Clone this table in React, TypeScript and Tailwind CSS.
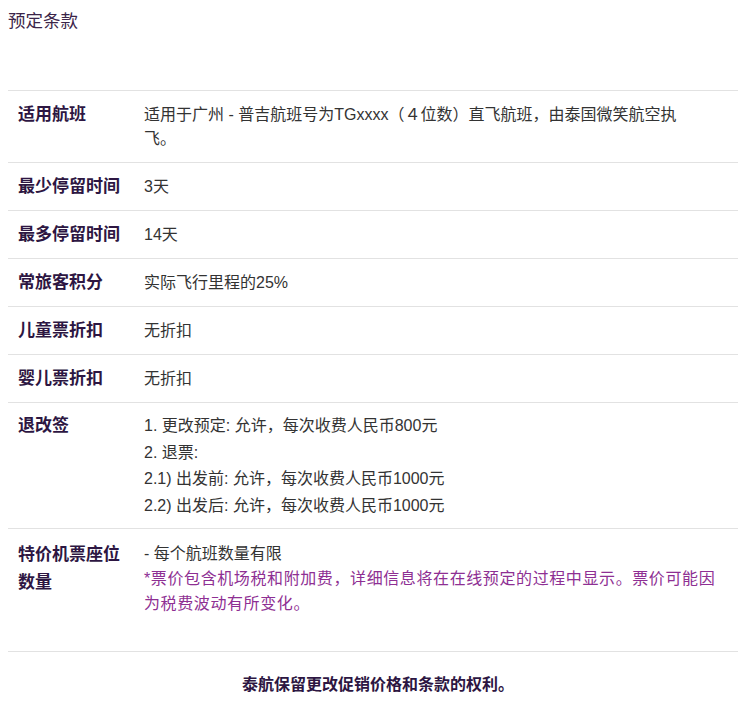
const FONT = "font-['Liberation_Sans','Noto_Sans_CJK_SC',sans-serif] [text-spacing-trim:space-all]";

interface Row {
  label: React.ReactNode;
  value: React.ReactNode;
}

const rows: Row[] = [
  {
    label: '适用航班',
    value: '适用于广州 - 普吉航班号为TGxxxx（４位数）直飞航班，由泰国微笑航空执飞。',
  },
  { label: '最少停留时间', value: '3天' },
  { label: '最多停留时间', value: '14天' },
  { label: '常旅客积分', value: '实际飞行里程的25%' },
  { label: '儿童票折扣', value: '无折扣' },
  { label: '婴儿票折扣', value: '无折扣' },
];

function Label({ children }: { children: React.ReactNode }) {
  return <div className="pl-[10px] pr-4 text-[17px] font-bold text-[#2d1642]">{children}</div>;
}

export default function App() {
  return (
    <div className={`w-[756px] min-h-[708px] bg-white ${FONT}`}>
      {/* Heading */}
      <div className="px-2 pt-[9px] text-[17.5px] leading-6 text-[#3b2549]">预定条款</div>

      <div className="mx-2 mt-[57px] w-[730px] border-t border-[#e2e2e2]">
        {rows.map((row, i) => (
          <div key={i} className="grid grid-cols-[136px_1fr] border-b border-[#e2e2e2] pt-3 pb-[11px] leading-6">
            <Label>{row.label}</Label>
            <div className="pr-[30px] text-[16px] text-[#333333]">{row.value}</div>
          </div>
        ))}

        {/* 退改签 */}
        <div className="grid grid-cols-[136px_1fr] border-b border-[#e2e2e2] pt-[10px] pb-[9px] leading-[26.5px]">
          <Label>退改签</Label>
          <div className="text-[16px] text-[#333333]">
            <p>1. 更改预定: 允许，每次收费人民币800元</p>
            <p>2. 退票:</p>
            <p>2.1) 出发前: 允许，每次收费人民币1000元</p>
            <p>2.2) 出发后: 允许，每次收费人民币1000元</p>
          </div>
        </div>

        {/* 特价机票座位数量 */}
        <div className="grid grid-cols-[136px_1fr] border-b border-[#e2e2e2] pt-3 pb-[35px]">
          <div className="pl-[10px] pr-4 text-[17px] font-bold leading-[28px] text-[#2d1642]">
            特价机票座位数量
          </div>
          <div className="pr-[10px] leading-[25px]">
            <p className="text-[16px] text-[#333333]">- 每个航班数量有限</p>
            <p className="text-[16px] tracking-[0.6px] text-[#8e2f93]">
              *票价包含机场税和附加费，详细信息将在在线预定的过程中显示。票价可能因为税费波动有所变化。
            </p>
          </div>
        </div>
      </div>

      {/* Footer */}
      <div className="pt-[21px] pb-[12px] text-center text-[16px] font-bold leading-6 text-[#2d1642]">
        泰航保留更改促销价格和条款的权利。
      </div>
    </div>
  );
}
